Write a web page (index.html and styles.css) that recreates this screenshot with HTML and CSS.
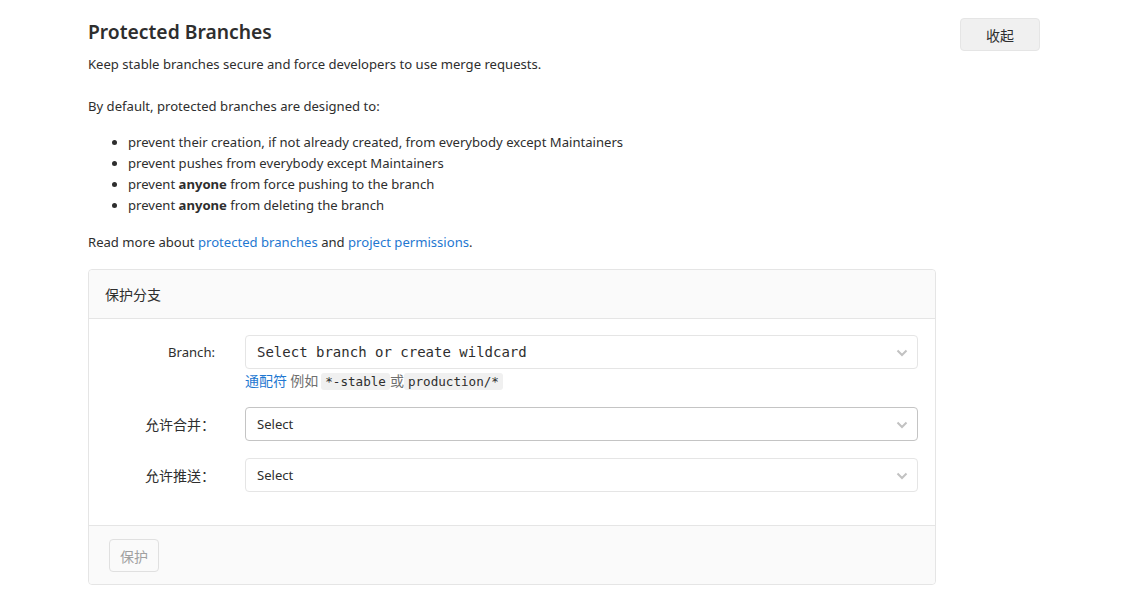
FILE: index.html
```html
<!DOCTYPE html>
<html lang="zh">
<head>
<meta charset="utf-8">
<title>Protected Branches</title>
<link rel="stylesheet" href="styles.css">
</head>
<body>
<div class="page">
  <section class="main">
    <h4 class="title">Protected Branches</h4>
    <p class="lead">Keep stable branches secure and force developers to use merge requests.</p>
    <p class="intro">By default, protected branches are designed to:</p>
    <ul class="rules">
      <li>prevent their creation, if not already created, from everybody except Maintainers</li>
      <li>prevent pushes from everybody except Maintainers</li>
      <li>prevent <strong>anyone</strong> from force pushing to the branch</li>
      <li>prevent <strong>anyone</strong> from deleting the branch</li>
    </ul>
    <p class="more">Read more about <a href="#">protected branches</a> and <a href="#">project permissions</a>.</p>

    <form class="card">
      <div class="card-header">保护分支</div>
      <div class="card-body">
        <div class="row first">
          <label class="label latin">Branch:</label>
          <div class="field">
            <div class="select mono">Select branch or create wildcard<span class="chev"><svg width="12" height="8" viewBox="0 0 12 8"><path d="M1.5 1.5 L6 6 L10.5 1.5" fill="none" stroke="#c2c2c2" stroke-width="2"/></svg></span></div>
            <div class="help"><a href="#">通配符</a> 例如 <code>*-stable</code>或<code>production/*</code></div>
          </div>
        </div>
        <div class="row">
          <label class="label">允许合并：</label>
          <div class="field">
            <div class="select dark">Select<span class="chev"><svg width="12" height="8" viewBox="0 0 12 8"><path d="M1.5 1.5 L6 6 L10.5 1.5" fill="none" stroke="#c2c2c2" stroke-width="2"/></svg></span></div>
          </div>
        </div>
        <div class="row">
          <label class="label">允许推送：</label>
          <div class="field">
            <div class="select">Select<span class="chev"><svg width="12" height="8" viewBox="0 0 12 8"><path d="M1.5 1.5 L6 6 L10.5 1.5" fill="none" stroke="#c2c2c2" stroke-width="2"/></svg></span></div>
          </div>
        </div>
      </div>
      <div class="card-footer">
        <button type="button" class="btn-protect" disabled>保护</button>
      </div>
    </form>
  </section>
  <div class="side">
    <button type="button" class="btn-toggle">收起</button>
  </div>
</div>
</body>
</html>
```

FILE: styles.css
```css
* { box-sizing: border-box; }
html, body { margin: 0; background: #fff; }
body {
  font-family: "Noto Sans", "Noto Sans CJK SC", sans-serif;
  font-size: 13.1px;
  line-height: 20px;
  color: #2e2e2e;
}
.page {
  display: flex;
  align-items: flex-start;
  padding: 0 88px;
}
.main { width: 848px; }
.side { padding-top: 18px; margin-left: 24px; }
.btn-toggle {
  width: 80px;
  height: 33px;
  background: #f0f0f0;
  border: 1px solid #e5e5e5;
  border-radius: 4px;
  font-family: "Noto Sans CJK SC", sans-serif;
  font-size: 14px;
  color: #2e2e2e;
  padding: 0;
}
.title {
  margin: 20px 0 0;
  font-size: 19.3px;
  line-height: 24px;
  font-weight: 600;
}
.lead { margin: 10px 0 0; }
.intro { margin: 22px 0 0; }
.rules {
  margin: 16px 0 0;
  padding-left: 40px;
}
.rules li { line-height: 21px; }
.more { margin: 16px 0 0; }
a { color: #1f78d1; text-decoration: none; }
.card {
  margin-top: 17px;
  border: 1px solid #e5e5e5;
  border-radius: 4px;
  background: #fff;
}
.card-header {
  height: 49px;
  padding: 14px 16px;
  background: #fafafa;
  border-bottom: 1px solid #e5e5e5;
  font-family: "Noto Sans CJK SC", sans-serif;
  font-size: 14px;
  border-radius: 4px 4px 0 0;
}
.card-body {
  padding: 16px 17px 17px 0;
}
.row {
  display: grid;
  grid-template-columns: 126px 1fr;
  column-gap: 30px;
  margin-bottom: 17px;
}
.row.first { margin-bottom: 16px; }
.row:last-child { margin-bottom: 16px; }
.label {
  text-align: right;
  line-height: 34px;
  font-family: "Noto Sans CJK SC", sans-serif;
  font-size: 14px;
}
.label.latin {
  font-family: "Noto Sans", sans-serif;
  font-size: 13.1px;
}
.select {
  position: relative;
  height: 34px;
  border: 1px solid #e5e5e5;
  border-radius: 4px;
  padding: 0 11px;
  line-height: 32px;
  color: #2e2e2e;
}
.select.dark { border-color: #c4c4c4; }
.mono { font-family: "DejaVu Sans Mono", monospace; font-size: 14px; }
.chev {
  position: absolute;
  right: 9px;
  top: 13px;
  line-height: 0;
}
.help {
  margin-top: 1px;
  height: 21px;
  line-height: 20px;
  color: #707070;
  font-family: "Noto Sans CJK SC", sans-serif;
  font-size: 14px;
  white-space: nowrap;
}
code {
  font-family: "DejaVu Sans Mono", monospace;
  font-size: 12.6px;
  background: #f0f0f0;
  color: #2e2e2e;
  border-radius: 3px;
  padding: 1px 4px;
}
.card-footer {
  padding: 13px 20px 12px;
  background: #fafafa;
  border-top: 1px solid #e5e5e5;
  border-radius: 0 0 4px 4px;
}
.btn-protect {
  width: 50px;
  height: 33px;
  background: #fafafa;
  border: 1px solid #e0e0e0;
  border-radius: 4px;
  color: #a0a0a0;
  font-family: "Noto Sans CJK SC", sans-serif;
  font-size: 14px;
  padding: 0;
}
```
